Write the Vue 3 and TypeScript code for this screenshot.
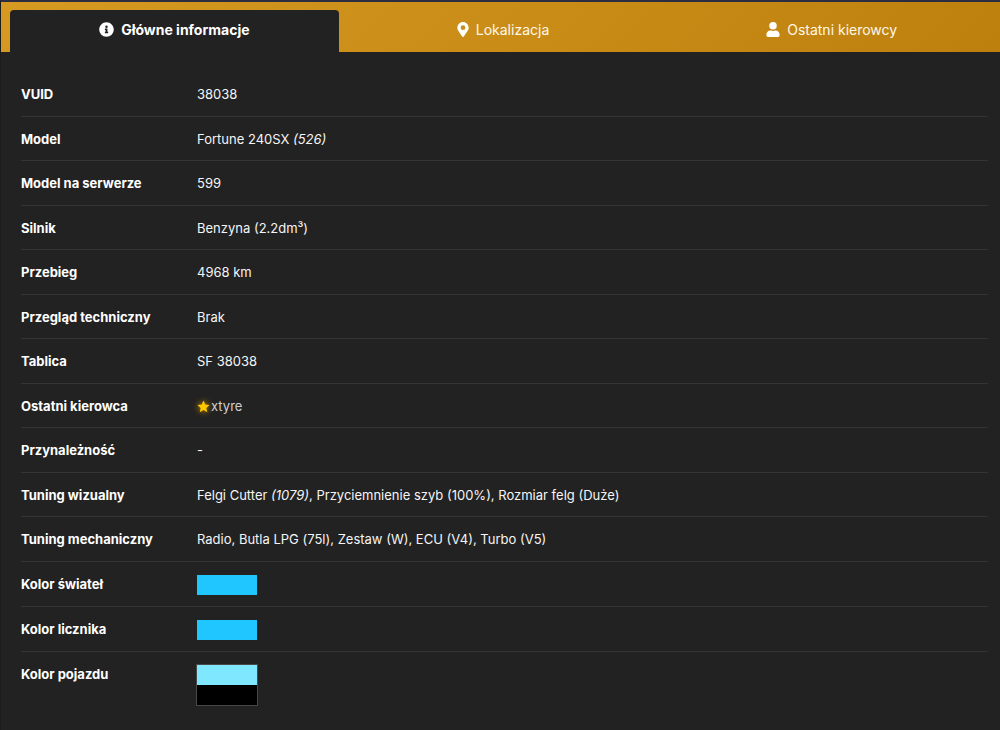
<script setup lang="ts">
import { ref } from 'vue'

type Part = { text: string; em?: boolean }
type Row = {
  label: string
  parts?: Part[]
  driver?: string
  colors?: string[]
  framed?: boolean
}

const tabs = [
  { id: 'info', label: 'Główne informacje' },
  { id: 'location', label: 'Lokalizacja' },
  { id: 'drivers', label: 'Ostatni kierowcy' },
]
const active = ref('info')

const rows: Row[] = [
  { label: 'VUID', parts: [{ text: '38038' }] },
  { label: 'Model', parts: [{ text: 'Fortune 240SX ' }, { text: '(526)', em: true }] },
  { label: 'Model na serwerze', parts: [{ text: '599' }] },
  { label: 'Silnik', parts: [{ text: 'Benzyna (2.2dm³)' }] },
  { label: 'Przebieg', parts: [{ text: '4968 km' }] },
  { label: 'Przegląd techniczny', parts: [{ text: 'Brak' }] },
  { label: 'Tablica', parts: [{ text: 'SF 38038' }] },
  { label: 'Ostatni kierowca', driver: 'xtyre' },
  { label: 'Przynależność', parts: [{ text: '-' }] },
  {
    label: 'Tuning wizualny',
    parts: [
      { text: 'Felgi Cutter ' },
      { text: '(1079)', em: true },
      { text: ', Przyciemnienie szyb (100%), Rozmiar felg (Duże)' },
    ],
  },
  { label: 'Tuning mechaniczny', parts: [{ text: 'Radio, Butla LPG (75l), Zestaw (W), ECU (V4), Turbo (V5)' }] },
  { label: 'Kolor świateł', colors: ['#20c6ff'] },
  { label: 'Kolor licznika', colors: ['#20c6ff'] },
  { label: 'Kolor pojazdu', colors: ['#7fe7ff', '#000000'], framed: true },
]
</script>

<template>
  <main class="panel">
    <nav class="tabs" role="tablist">
      <button
        v-for="tab in tabs"
        :key="tab.id"
        type="button"
        role="tab"
        class="tab"
        :class="{ active: active === tab.id }"
        :aria-selected="active === tab.id"
        @click="active = tab.id"
      >
        <svg v-if="tab.id === 'info'" class="icon" viewBox="0 0 512 512" aria-hidden="true">
          <path d="M256 8C119 8 8 119 8 256s111 248 248 248 248-111 248-248S393 8 256 8zm0 110a42 42 0 1 1 0 84 42 42 0 0 1 0-84zm56 254c0 7-5 12-12 12h-88c-7 0-12-5-12-12v-24c0-7 5-12 12-12h12v-64h-12c-7 0-12-5-12-12v-24c0-7 5-12 12-12h64c7 0 12 5 12 12v100h12c7 0 12 5 12 12v24z" />
        </svg>
        <svg v-else-if="tab.id === 'location'" class="icon pin" viewBox="0 0 384 512" aria-hidden="true">
          <path d="M172 502C27 291 0 269 0 192 0 86 86 0 192 0s192 86 192 192c0 77-27 99-172 310-10 13-30 13-40 0zm20-230a80 80 0 1 0 0-160 80 80 0 0 0 0 160z" />
        </svg>
        <svg v-else class="icon person" viewBox="0 0 448 512" aria-hidden="true">
          <path d="M224 256a128 128 0 1 0 0-256 128 128 0 0 0 0 256zm90 32h-17a174 174 0 0 1-146 0h-17C60 288 0 348 0 422v42c0 27 21 48 48 48h352c27 0 48-21 48-48v-42c0-74-60-134-134-134z" />
        </svg>
        <span>{{ tab.label }}</span>
      </button>
    </nav>

    <section class="content">
      <table class="details">
        <tbody>
          <tr v-for="row in rows" :key="row.label">
            <th scope="row">{{ row.label }}</th>
            <td>
              <a v-if="row.driver" class="driver" href="#">
                <svg class="star" viewBox="0 0 24 24" aria-hidden="true">
                  <path d="M12 1l3.3 7.3 7.9.9-5.9 5.4 1.6 7.9L12 18.6l-6.9 3.9 1.6-7.9L.8 9.2l7.9-.9z" />
                </svg>
                <span>{{ row.driver }}</span>
              </a>
              <div v-else-if="row.colors" class="swatches" :class="{ framed: row.framed }">
                <div v-for="color in row.colors" :key="color" class="swatch" :style="{ background: color }"></div>
              </div>
              <template v-else>
                <template v-for="part in row.parts" :key="part.text"><em v-if="part.em">{{ part.text }}</em><template v-else>{{ part.text }}</template></template>
              </template>
            </td>
          </tr>
        </tbody>
      </table>
    </section>
  </main>
</template>

<style>
body {
  margin: 0;
  background: #222;
}
</style>

<style scoped>
.panel {
  box-sizing: border-box;
  min-height: 100vh;
  border-top: 2px solid #2d2d42;
  border-left: 1px solid #1c1c1c;
  background: #222;
  color: #f5f5f5;
  font-family: Inter, "Liberation Sans", sans-serif;
  font-size: 13px;
  line-height: 1.5;
}

.tabs {
  display: flex;
  padding: 8px 4px 0 9px;
  background: linear-gradient(135deg, #d69a22, #bd800d);
}

.tab {
  flex: 1;
  display: flex;
  align-items: center;
  justify-content: center;
  gap: 7px;
  height: 42px;
  padding: 0 0 3px;
  border: 0;
  border-radius: 4px 4px 0 0;
  background: none;
  color: #fff8e8;
  font: inherit;
  font-size: 14px;
  cursor: pointer;
}

.tab.active {
  background: #222;
  color: #fff;
  font-weight: 700;
}

.icon {
  width: 15px;
  height: 15px;
  fill: #fff;
}

.icon.pin {
  width: 12px;
}

.icon.person {
  width: 14px;
}

.content {
  padding: 20px 12px 12px 20px;
}

.details {
  width: 100%;
  border-collapse: separate;
  border-spacing: 0;
}

th,
td {
  padding: 13px 0 11px;
  border-bottom: 1px solid #343434;
  text-align: left;
  vertical-align: top;
}

th {
  width: 176px;
  color: #fff;
  font-weight: 700;
}

tr:last-child > * {
  border-bottom: 0;
}

.driver {
  display: flex;
  align-items: center;
  gap: 1px;
  color: #d0d0d0;
  text-decoration: none;
}

.star {
  width: 13px;
  height: 13px;
  fill: #ffc800;
  filter: drop-shadow(0 0 3px #d89b00);
}

.swatches {
  width: 60px;
}

.swatches.framed {
  outline: 1px solid #484848;
}

.swatch {
  height: 20px;
}
</style>
